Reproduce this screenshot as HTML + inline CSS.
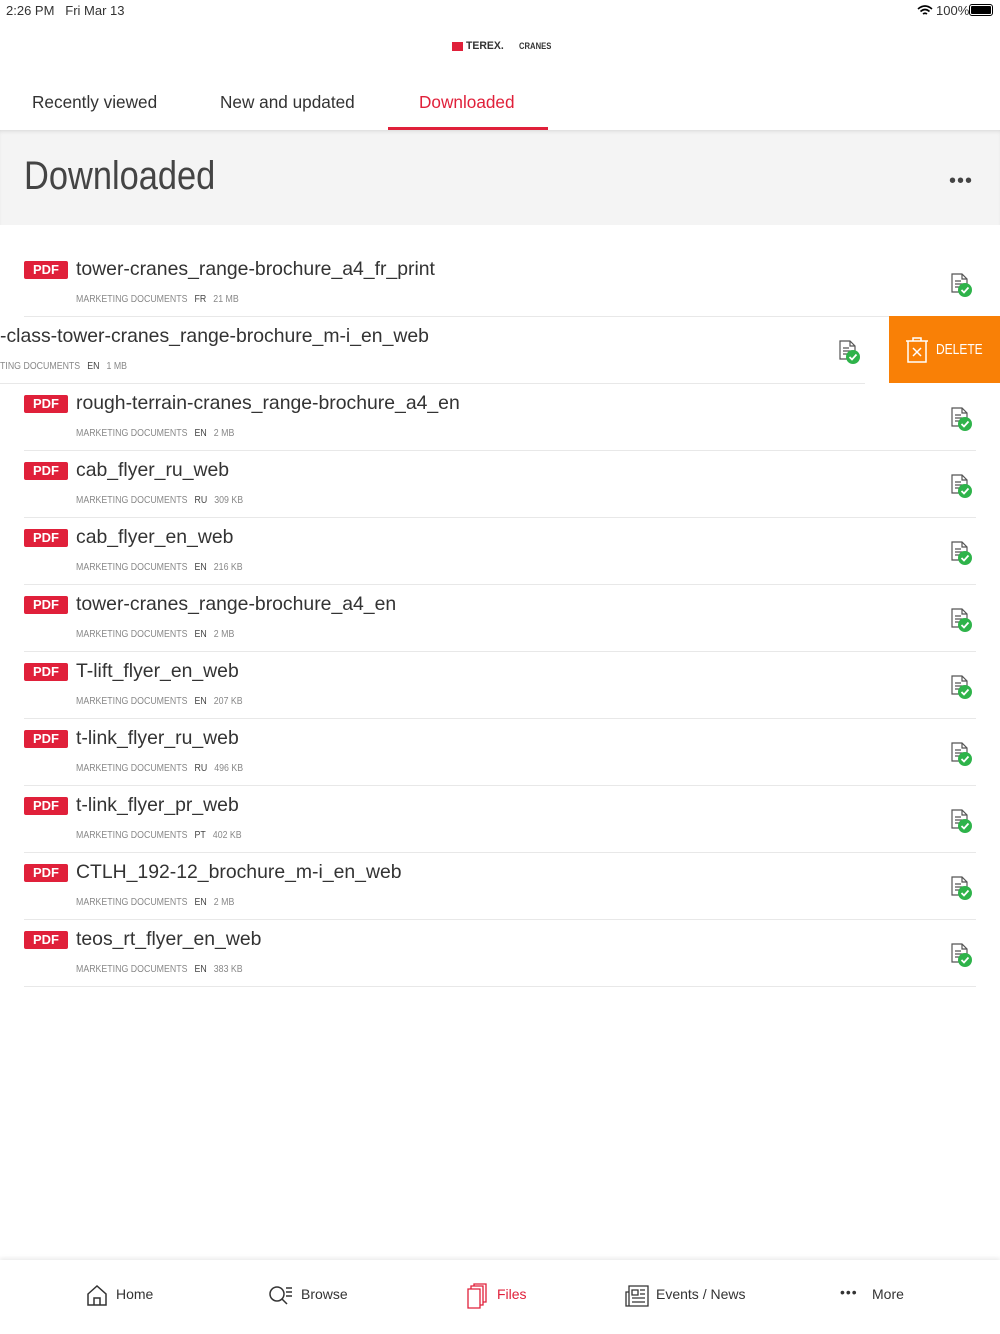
<!DOCTYPE html>
<html><head><meta charset="utf-8"><style>
*{margin:0;padding:0;box-sizing:border-box}
body{width:1000px;height:1334px;background:#fff;font-family:"Liberation Sans",sans-serif;position:relative;overflow:hidden;color:#333}
.abs{position:absolute}
.tab{position:absolute;top:92px;font-size:17.2px;color:#333}
.row{position:absolute;left:0;width:1000px;height:67px}
.row .sep{position:absolute;left:24px;right:24px;bottom:0;height:1px;background:#e8e8e8}
.badge{position:absolute;left:24px;top:11px;width:44px;height:18px;background:#e0203a;color:#fff;font-weight:bold;font-size:13px;line-height:18px;text-align:center;border-radius:2px}
.t{position:absolute;left:76px;top:8px;font-size:19.4px;color:#333;white-space:nowrap}
.m{position:absolute;left:76px;top:44px;font-size:10px;color:#888;white-space:nowrap;transform:scaleX(.88);transform-origin:left}
.m b{font-weight:normal;color:#444;margin:0 8px 0 8px}
.ic{position:absolute;left:950px;top:23px}
.nav{position:absolute;top:1286px;font-size:14px;color:#333}
</style></head><body>
<div class="abs" style="left:6px;top:3px;font-size:13px;">2:26 PM&nbsp;&nbsp; Fri Mar 13</div>
<div class="abs" style="left:936px;top:3px;font-size:13px;">100%</div>
<svg class="abs" style="left:917px;top:5px" width="16" height="11"><path d="M1 4 Q8 -2 15 4 M3.5 6.5 Q8 2.5 12.5 6.5 M6 9 Q8 7.5 10 9" stroke="#000" stroke-width="1.6" fill="none"/></svg>
<div class="abs" style="left:969px;top:4px;width:24px;height:12px;border:1px solid #000;border-radius:3px;padding:1px"><div style="background:#000;width:100%;height:100%;border-radius:1px"></div></div>
<div class="abs" style="left:452px;top:42px;width:11px;height:9px;background:#e0203a"></div>
<div class="abs" style="left:466px;top:40px;font-size:11px;font-weight:bold;transform:scaleX(.95);transform-origin:left">TEREX.</div>
<div class="abs" style="left:519px;top:41px;font-size:9px;font-weight:bold;transform:scaleX(.85);transform-origin:left">CRANES</div>
<div class="tab" style="left:32px">Recently viewed</div>
<div class="tab" style="left:220px">New and updated</div>
<div class="tab" style="left:419px;color:#e0203a">Downloaded</div>
<div class="abs" style="left:388px;top:127px;width:160px;height:3px;background:#e0203a"></div>
<div class="abs" style="left:0;top:130px;width:1000px;height:95px;background:#f4f4f4;box-shadow:inset 0 3px 4px -2px rgba(0,0,0,.12)"></div>
<div class="abs" style="left:24px;top:154px;font-size:40px;font-weight:300;color:#444;transform:scaleX(0.86);transform-origin:left">Downloaded</div>
<div class="abs" style="left:949px;top:170px;font-size:20px;letter-spacing:1px;color:#444">•••</div>
<div id="rows"></div>
<div class="abs" style="left:889px;top:316px;width:111px;height:67px;background:#f98006"></div>
<svg class="abs" style="left:905px;top:337px" width="24" height="26"><path d="M1 4H23M8 4V1H16V4M3 4V25H21V4M8 11L16 19M16 11L8 19" stroke="#fff" stroke-width="1.5" fill="none"/></svg>
<div class="abs" style="left:936px;top:341px;font-size:15px;color:#fff;transform:scaleX(.8);transform-origin:left">DELETE</div>
<div class="abs" style="left:0;top:1260px;width:1000px;height:74px;background:#fff;box-shadow:0 -2px 4px rgba(0,0,0,.08)"></div>
<svg class="abs" style="left:86px;top:1284px" width="22" height="22"><path d="M2 10L11 2L20 10V21H2Z M8 21V14H14V21" stroke="#333" stroke-width="1.5" fill="none"/></svg>
<div class="nav" style="left:116px">Home</div>
<svg class="abs" style="left:268px;top:1285px" width="26" height="22"><circle cx="9" cy="9" r="7" stroke="#333" stroke-width="1.5" fill="none"/><path d="M14 14L19 19M18 3H24M18 7H24M18 11H24" stroke="#333" stroke-width="1.5"/></svg>
<div class="nav" style="left:301px">Browse</div>
<svg class="abs" style="left:466px;top:1283px" width="24" height="26"><path d="M2 6H14V25H2Z M5 6V3H17V22H14 M8 3V1H20V19H17" stroke="#e0203a" stroke-width="1.3" fill="none"/></svg>
<div class="nav" style="left:497px;color:#e0203a">Files</div>
<svg class="abs" style="left:624px;top:1284px" width="26" height="24"><path d="M5 2H24V22H2V8H5Z M5 8V22 M8 6H14V11H8Z M16 6H21M16 10H21M8 14H21M8 18H21" stroke="#333" stroke-width="1.3" fill="none"/></svg>
<div class="nav" style="left:656px">Events / News</div>
<div class="nav" style="left:840px;top:1284px;letter-spacing:1px">•••</div>
<div class="nav" style="left:872px">More</div>
<script>
var d=[["tower-cranes_range-brochure_a4_fr_print","FR","21 MB"],["-class-tower-cranes_range-brochure_m-i_en_web","EN","1 MB"],["rough-terrain-cranes_range-brochure_a4_en","EN","2 MB"],["cab_flyer_ru_web","RU","309 KB"],["cab_flyer_en_web","EN","216 KB"],["tower-cranes_range-brochure_a4_en","EN","2 MB"],["T-lift_flyer_en_web","EN","207 KB"],["t-link_flyer_ru_web","RU","496 KB"],["t-link_flyer_pr_web","PT","402 KB"],["CTLH_192-12_brochure_m-i_en_web","EN","2 MB"],["teos_rt_flyer_en_web","EN","383 KB"]];
var ic='<svg class="ic" width="24" height="26"><path d="M2 1H12L17 6V19H2Z M12 1V6H17 M5 8H11M5 11H14M5 14H10" stroke="#555" stroke-width="1.2" fill="#fff"/><circle cx="15" cy="17" r="7" fill="#2eb34a"/><path d="M11.5 17L14 19.5L18.5 14.5" stroke="#fff" stroke-width="1.8" fill="none"/></svg>';
var h='';d.forEach(function(r,i){
h+='<div class="row" style="top:'+(250+67*i)+'px">'+(i==1?'<div class="t" style="left:0">'+r[0]+'</div><div class="m" style="left:0">TING DOCUMENTS<b>'+r[1]+'</b>'+r[2]+'</div><div class="sep" style="left:0;right:135px"></div>'+ic.replace('class="ic"','class="ic" style="left:838px"'):'<div class="badge">PDF</div><div class="t">'+r[0]+'</div><div class="m">MARKETING DOCUMENTS<b>'+r[1]+'</b>'+r[2]+'</div><div class="sep"></div>'+ic)+'</div>';});
document.getElementById('rows').innerHTML=h;
</script>
</body></html>
